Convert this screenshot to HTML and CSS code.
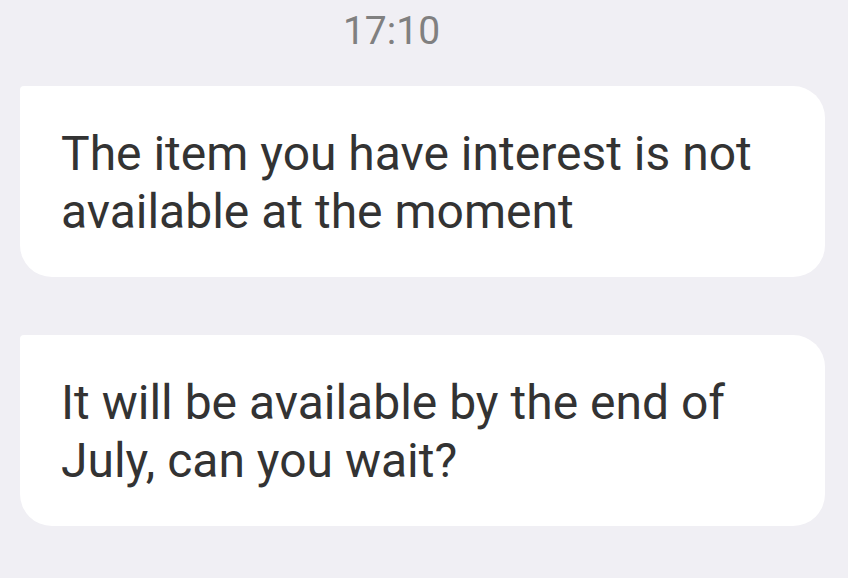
FILE: index.html
```html
<!DOCTYPE html>
<html lang="en">
<head>
  <meta charset="UTF-8">
  <meta name="viewport" content="width=device-width, initial-scale=1.0">
  <title>Messages</title>
  <link rel="stylesheet" href="styles.css">
</head>
<body>

<div class="thread">
  <div class="time">17:10</div>
  <div class="bubble">The item you have interest is not available at the moment</div>
  <div class="bubble">It will be available by the end of July, can you wait?</div>
</div>

</body>
</html>
```

FILE: styles.css
```css
body {
  font-family: Roboto, "Noto Sans", sans-serif;
  margin: 0;
  background: #f0eff4;
}
.thread {
  display: flex;
  flex-direction: column;
  gap: 58px;
  padding: 8px 23px 0 20px;
}
.time {
  font-size: 39px;
  line-height: 46px;
  color: #808080;
  text-align: center;
  padding-right: 62px;
  margin-bottom: -26px;
}
.bubble {
  background: #fff;
  color: #333;
  font-size: 48px;
  line-height: 58px;
  padding: 39px 40px 36px 41px;
  border-radius: 4px 32px 32px 32px;
}
```
